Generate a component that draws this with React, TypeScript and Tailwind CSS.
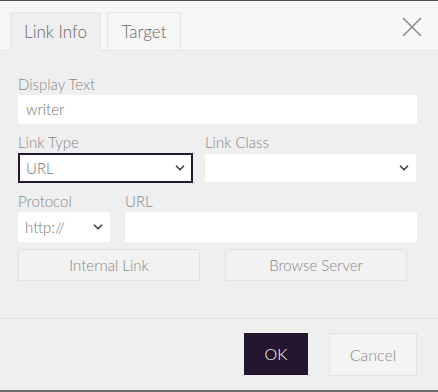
import { ChevronDown } from 'lucide-react'

// Small select box with a chevron on the right
function SelectBox({ value, className }: { value?: string; className: string }) {
  return (
    <div className={`flex items-center justify-between bg-white ${className}`}>
      <span className="text-[15px] text-[#777] font-light">{value}</span>
      <ChevronDown className="w-[14px] h-[14px] text-[#444]" strokeWidth={3} />
    </div>
  )
}

export default function App() {
  return (
    <div
      className="w-[438px] h-[392px] flex flex-col bg-[#efefef] overflow-hidden"
      style={{ fontFamily: 'Lato, "Open Sans", sans-serif' }}
    >
      {/* top edge of the page behind */}
      <div className="h-px bg-[#5a4f48] shrink-0" />

      {/* header with tabs */}
      <div className="h-[50px] shrink-0 flex items-end justify-between bg-[#f7f7f7] border-b border-[#e4e4e4] pl-[10px] pr-[15px]">
        <div className="flex gap-[6px] -mb-px">
          <div className="h-[39px] w-[91px] flex items-center justify-center bg-[#efefef] border border-b-0 border-[#e6e6e6] text-[17px] text-[#666] font-light">
            Link Info
          </div>
          <div className="h-[38px] w-[74px] flex items-center justify-center bg-[#f7f7f7] border border-b-0 border-[#e6e6e6] text-[17px] text-[#666] font-light">
            Target
          </div>
        </div>
        <svg width="22" height="22" viewBox="0 0 22 22" className="self-start mt-[15px]">
          <path d="M2 2 L20 20 M20 2 L2 20" stroke="#8c8c8c" strokeWidth="1.5" fill="none" />
        </svg>
      </div>

      {/* body */}
      <div className="flex flex-col px-[18px] pt-[24px] text-[#888] font-light">
        <div className="text-[15px] leading-[18px]">Display Text</div>
        <div className="mt-[2px] h-[29px] w-[399px] bg-white flex items-center px-[8px] text-[15px] text-[#777]">
          writer
        </div>

        <div className="mt-[9px] flex gap-[12px]">
          <div className="flex flex-col w-[175px]">
            <div className="text-[15px] leading-[18px]">Link Type</div>
            <SelectBox
              value="URL"
              className="mt-[2px] h-[30px] border-2 border-[#24172e] pl-[6px] pr-[4px]"
            />
          </div>
          <div className="flex flex-col w-[211px]">
            <div className="text-[15px] leading-[18px]">Link Class</div>
            <SelectBox className="mt-[3px] h-[28px] pl-[6px] pr-[5px]" />
          </div>
        </div>

        <div className="mt-[9px] flex gap-[15px]">
          <div className="flex flex-col w-[92px]">
            <div className="text-[15px] leading-[18px]">Protocol</div>
            <SelectBox value="http://" className="mt-[2px] h-[30px] pl-[7px] pr-[5px]" />
          </div>
          <div className="flex flex-col w-[292px]">
            <div className="text-[15px] leading-[18px]">URL</div>
            <div className="mt-[2px] h-[30px] bg-white" />
          </div>
        </div>

        <div className="mt-[7px] flex gap-[25px]">
          <div className="h-[32px] w-[182px] flex items-center justify-center bg-[#f2f2f2] border border-[#e2e2e2] rounded-[2px] text-[15px] text-[#888]">
            Internal Link
          </div>
          <div className="h-[32px] w-[182px] flex items-center justify-center bg-[#f2f2f2] border border-[#e2e2e2] rounded-[2px] text-[15px] text-[#888]">
            Browse Server
          </div>
        </div>
      </div>

      {/* footer */}
      <div className="mt-[37px] border-t border-[#e4e4e4] flex justify-end gap-[21px] pt-[14px] pr-[21px]">
        <div className="h-[42px] w-[64px] flex items-center justify-center bg-[#24162e] text-white text-[16px] font-light">
          OK
        </div>
        <div className="h-[43px] w-[88px] flex items-center justify-center bg-[#f4f4f4] border border-[#e2e2e2] text-[#888] text-[16px] font-light">
          Cancel
        </div>
      </div>

      <div className="mt-auto h-[2px] bg-[#6b6b6b] shrink-0" />
    </div>
  )
}
